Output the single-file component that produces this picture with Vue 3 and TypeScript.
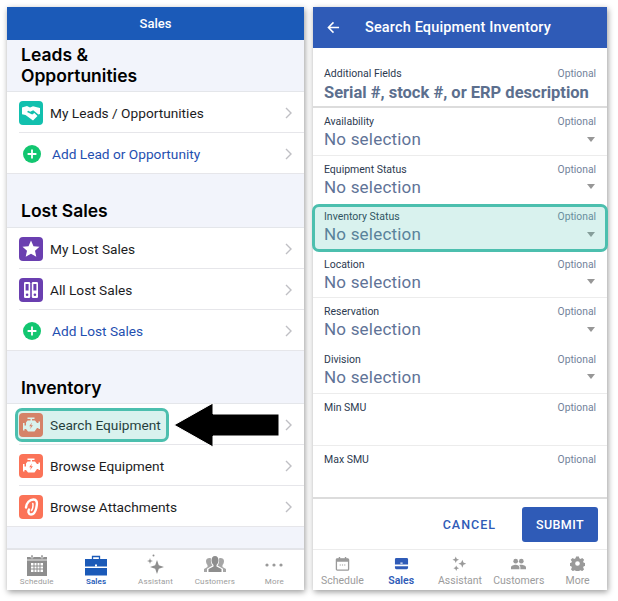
<script setup lang="ts">
type Row = { label: string; icon: string; add?: boolean };
type Section = { title: string[]; rows: Row[] };

const sections: Section[] = [
  {
    title: ["Leads &", "Opportunities"],
    rows: [
      { label: "My Leads / Opportunities", icon: "handshake" },
      { label: "Add Lead or Opportunity", icon: "add", add: true },
    ],
  },
  {
    title: ["Lost Sales"],
    rows: [
      { label: "My Lost Sales", icon: "star" },
      { label: "All Lost Sales", icon: "binders" },
      { label: "Add Lost Sales", icon: "add", add: true },
    ],
  },
  {
    title: ["Inventory"],
    rows: [
      { label: "Search Equipment", icon: "engine" },
      { label: "Browse Equipment", icon: "engine" },
      { label: "Browse Attachments", icon: "hook" },
    ],
  },
];

const fields = [
  { label: "Availability", line: true },
  { label: "Equipment Status", line: false },
  { label: "Inventory Status", line: false },
  { label: "Location", line: true },
  { label: "Reservation", line: false },
  { label: "Division", line: true },
];

const tabs = ["Schedule", "Sales", "Assistant", "Customers", "More"];
</script>

<template>
  <div class="page">
    <section class="phone phone_left">
      <header class="sales-head">Sales</header>
      <div class="sales-body">
        <div v-for="section in sections" :key="section.title[0]" class="group">
          <h2 class="group__title">
            <span v-for="line in section.title" :key="line">{{ line }}</span>
          </h2>
          <ul class="list">
            <li v-for="row in section.rows" :key="row.label" class="row" :class="{ row_add: row.add }">
              <svg v-if="row.icon === 'handshake'" class="app-icon" viewBox="0 0 24 24">
                <rect width="24" height="24" rx="4" fill="#12c0ae" />
                <path d="M3 6.500 8 5l3 1.500 3-1.300 7 1.800v6l-1.600.6-5.200-4.400-3 1.600-2-1-1.200 1.200 5.200 2.400 2.200-1.300 3.100 2.800-4.500 4.600-7.500-5.500-3.500-.8z" fill="#fff" />
              </svg>
              <svg v-else-if="row.icon === 'add'" class="add-icon" viewBox="0 0 18 18">
                <circle cx="9" cy="9" r="9" fill="#12c670" />
                <path d="M9 4.600v8.800M4.600 9h8.800" stroke="#fff" stroke-width="1.800" />
              </svg>
              <svg v-else-if="row.icon === 'star'" class="app-icon" viewBox="0 0 24 24">
                <rect width="24" height="24" rx="4" fill="#6a3fb0" />
                <path d="m12 3.600 2.500 5.600 6 .6-4.500 4 1.300 6L12 16.700l-5.300 3.100 1.300-6-4.500-4 6-.6z" fill="#fff" />
              </svg>
              <svg v-else-if="row.icon === 'binders'" class="app-icon" viewBox="0 0 24 24">
                <rect width="24" height="24" rx="4" fill="#6a3fb0" />
                <rect x="5" y="4" width="6.200" height="16" rx="1.200" fill="#fff" />
                <rect x="12.800" y="4" width="6.200" height="16" rx="1.200" fill="#fff" />
                <rect x="6.600" y="6" width="3" height="6.500" fill="#6a3fb0" />
                <rect x="14.400" y="6" width="3" height="6.500" fill="#6a3fb0" />
                <circle cx="8.100" cy="16.800" r="1.300" fill="#6a3fb0" />
                <circle cx="15.900" cy="16.800" r="1.300" fill="#6a3fb0" />
              </svg>
              <svg v-else-if="row.icon === 'engine'" class="app-icon" viewBox="0 0 24 24">
                <rect width="24" height="24" rx="4" fill="#fb7358" />
                <path d="M8.500 4.500h7v1.500h-2.500v1.500h3l2 2.500h1.500v-1.500h1.500v7.500H19.500V15h-1.500l-2.500 3.500H9L7 16H5.500v1.500H4V10h1.500v2.500H7V9.500l1.500-2h3V6H8.500z" fill="#fff" />
                <path d="M13 9.500 10.200 13.300h1.800l-1 2.900 2.900-4h-1.800z" fill="#fb7358" />
              </svg>
              <svg v-else class="app-icon" viewBox="0 0 24 24">
                <rect width="24" height="24" rx="4" fill="#fb7358" />
                <path d="M7 12.500C7.500 8 10.500 4.500 14.500 4.500c3 0 3.700 2.500 3.300 5.500-.5 4-1.800 9.500-5.800 9.500-2.700 0-3-3-2-5" fill="none" stroke="#fff" stroke-width="2.400" stroke-linecap="round" />
                <path d="M13.800 8.500c.5 2.500 0 5-1.300 7" fill="none" stroke="#fff" stroke-width="1.500" stroke-linecap="round" />
              </svg>
              <span class="row__label">{{ row.label }}</span>
              <svg class="chevron" viewBox="0 0 7 12">
                <path d="m1 1 5 5-5 5" fill="none" stroke="#bfbfc4" stroke-width="1.400" />
              </svg>
            </li>
          </ul>
        </div>
      </div>
      <nav class="tabs tabs_left">
        <div v-for="tab in tabs" :key="tab" class="tab" :class="{ tab_active: tab === 'Sales' }">
          <svg v-if="tab === 'Schedule'" class="tab__icon" viewBox="0 0 22 22">
            <path d="M1 3h20v19H1z" fill="#8e8e8e" />
            <path d="M5 1h2v3H5zM15 1h2v3h-2z" fill="#8e8e8e" stroke="#fff" stroke-width=".5" />
            <path d="M1 6h20" stroke="#fff" stroke-width=".8" />
            <path d="M5 9h12v9H5z" fill="#fff" />
            <path d="M8 9v9M11 9v9M14 9v9M5 12h12M5 15h12" stroke="#8e8e8e" stroke-width="1" />
          </svg>
          <svg v-else-if="tab === 'Sales'" class="tab__icon" viewBox="0 0 22 22">
            <path d="M7.500 5V2.500h7V5" fill="none" stroke="#1b5ab8" stroke-width="1.300" />
            <path d="M0 5h22v7.500H0zM0 14h22v7.500H0z" fill="#1b5ab8" />
            <rect x="10" y="10.500" width="2" height="2" fill="#fff" />
          </svg>
          <svg v-else-if="tab === 'Assistant'" class="tab__icon" viewBox="0 0 22 22">
            <path d="m13 6 1.800 5.200L20 13l-5.200 1.800L13 20l-1.800-5.200L6 13l5.200-1.800z" fill="#8e8e8e" />
            <path d="m6 4 .7 2.300L9 7l-2.300.7L6 10l-.7-2.300L3 7l2.300-.7z" fill="#8e8e8e" />
            <circle cx="9.500" cy="1.500" r="1" fill="#8e8e8e" />
          </svg>
          <svg v-else-if="tab === 'Customers'" class="tab__icon" viewBox="0 0 22 22">
            <path d="M11 2c2.300 0 3.500 2 3.500 4.300 0 2-.8 3.700-2 4.700v1.500l5 2.500v3H4.500v-3l5-2.500V11c-1.200-1-2-2.700-2-4.700C7.500 4 8.700 2 11 2z" fill="#8e8e8e" />
            <path d="M5.500 4c1 0 1.500.5 1.500.5-.5 3 .3 5.500 1.500 7L3 14.800V18H0v-3l3.500-2v-2C2.500 10 2 8.500 2 7c0-1.800 1.500-3 3.500-3zM16.500 4c2 0 3.500 1.200 3.500 3 0 1.500-.5 3-1.500 4v2l3.500 2v3h-3v-3.200l-5.500-3.300c1.200-1.500 2-4 1.500-7 0 0 .5-.5 1.500-.5z" fill="#a6a6a6" />
          </svg>
          <svg v-else class="tab__icon" viewBox="0 0 22 22">
            <circle cx="4" cy="11" r="1.600" fill="#9a9a9a" />
            <circle cx="11" cy="11" r="1.600" fill="#9a9a9a" />
            <circle cx="18" cy="11" r="1.600" fill="#9a9a9a" />
          </svg>
          <span class="tab__label">{{ tab }}</span>
        </div>
      </nav>

      <div class="mark mark_equipment"></div>
      <svg class="arrow" viewBox="0 0 108 48">
        <path d="M2 24 41 2v11h66v22H41v11z" fill="#000" stroke="#fff" stroke-width="1" />
      </svg>
    </section>

    <section class="phone phone_right">
      <header class="search-head">
        <svg class="back" viewBox="0 0 14 14">
          <path d="M13 7H2M7 1.500 1.500 7 7 12.500" fill="none" stroke="#fff" stroke-width="1.600" />
        </svg>
        <span>Search Equipment Inventory</span>
      </header>
      <div class="form">
        <div class="extra">
          <div class="field__top">
            <span class="field__label">Additional Fields</span>
            <span class="field__opt">Optional</span>
          </div>
          <div class="extra__hint">Serial #, stock #, or ERP description</div>
        </div>
        <div v-for="field in fields" :key="field.label" class="field" :class="{ field_line: field.line }">
          <div class="field__top">
            <span class="field__label">{{ field.label }}</span>
            <span class="field__opt">Optional</span>
          </div>
          <div class="field__value">
            <span>No selection</span>
            <i class="caret"></i>
          </div>
        </div>
        <div class="field field_free field_line">
          <div class="field__top">
            <span class="field__label">Min SMU</span>
            <span class="field__opt">Optional</span>
          </div>
        </div>
        <div class="field field_free">
          <div class="field__top">
            <span class="field__label">Max SMU</span>
            <span class="field__opt">Optional</span>
          </div>
        </div>
      </div>
      <footer class="actions">
        <span class="cancel">CANCEL</span>
        <span class="submit">SUBMIT</span>
      </footer>
      <nav class="tabs tabs_right">
        <div v-for="tab in tabs" :key="tab" class="tab" :class="{ tab_active: tab === 'Sales' }">
          <svg v-if="tab === 'Schedule'" class="tab__icon" viewBox="0 0 16 16">
            <path d="M2.500 3h11a1 1 0 0 1 1 1v10a1 1 0 0 1-1 1h-11a1 1 0 0 1-1-1V4a1 1 0 0 1 1-1z" fill="none" stroke="#9a9a9a" stroke-width="1.400" />
            <path d="M2 3h12v3H2zM4 1h1.500v2H4zM10.500 1H12v2h-1.500z" fill="#9a9a9a" />
            <path d="M5 9h1.200v1.200H5zM7.400 9h1.200v1.200H7.400zM9.800 9H11v1.200H9.800z" fill="#9a9a9a" />
          </svg>
          <svg v-else-if="tab === 'Sales'" class="tab__icon" viewBox="0 0 16 16">
            <path d="M1 3.500A1.500 1.500 0 0 1 2.500 2h11A1.500 1.500 0 0 1 15 3.500V9H1zM1 11h14v1.500a1.500 1.500 0 0 1-1.500 1.500h-11A1.500 1.500 0 0 1 1 12.500z" fill="#2f5bb7" />
            <rect x="6.800" y="7" width="2.400" height="1.200" fill="#fff" />
          </svg>
          <svg v-else-if="tab === 'Assistant'" class="tab__icon" viewBox="0 0 16 16">
            <path d="m4 .5 1 2.500 2.500 1L5 5 4 7.500 3 5 .5 4 3 3zM11 4l1.200 3 3 1.200-3 1.200-1.200 3-1.200-3-3-1.200 3-1.200zM4.500 10l.9 2.100 2.100.9-2.100.9-.9 2.100-.9-2.100-2.100-.9 2.100-.9z" fill="#9a9a9a" />
          </svg>
          <svg v-else-if="tab === 'Customers'" class="tab__icon" viewBox="0 0 16 16">
            <circle cx="5" cy="5.500" r="2.500" fill="#9a9a9a" />
            <circle cx="11" cy="5.500" r="2.500" fill="#9a9a9a" />
            <path d="M0 14v-1.800C0 10.300 3 9.300 5 9.300s4 1 4 2.900V14zM10 14v-1.800c0-1.200-.5-2-1.300-2.600.8-.2 1.600-.3 2.300-.3 2 0 5 1 5 2.900V14z" fill="#9a9a9a" />
          </svg>
          <svg v-else class="tab__icon" viewBox="0 0 16 16">
            <path fill-rule="evenodd" d="M6.500 .5h3l.4 2 1.400.6 1.700-1.100 2.100 2.100-1.100 1.700.6 1.400 2 .4v3l-2 .4-.6 1.400 1.100 1.700-2.100 2.100-1.700-1.100-1.400.6-.4 2h-3l-.4-2-1.400-.6-1.700 1.100-2.100-2.100 1.100-1.700-.6-1.400-2-.4v-3l2-.4.6-1.400L.7 4.100 2.800 2l1.700 1.100 1.400-.6zM8 5.500a2.500 2.500 0 1 0 0 5 2.500 2.500 0 0 0 0-5z" fill="#9a9a9a" />
          </svg>
          <span class="tab__label">{{ tab }}</span>
        </div>
      </nav>

      <div class="mark mark_status"></div>
    </section>
  </div>
</template>

<style>
html,
body {
  margin: 0;
  background: #fff;
}
</style>

<style scoped>
.page {
  display: flex;
  gap: 9px;
  width: 618px;
  height: 601px;
  padding: 7px 0 0 7px;
  box-sizing: border-box;
}

.phone {
  position: relative;
  display: flex;
  flex-direction: column;
  height: 583px;
  background: #fff;
  box-shadow: 1px 2px 6px rgba(0, 0, 0, 0.4);
}

.phone_left {
  width: 297px;
  font-family: Roboto, "Liberation Sans", sans-serif;
}

.phone_right {
  width: 294px;
  font-family: Roboto, "Liberation Sans", sans-serif;
}

.sales-head {
  flex: none;
  height: 33px;
  line-height: 33px;
  text-align: center;
  font-size: 13px;
  font-weight: 500;
  color: #fff;
  background: #1b5ab8;
}

.sales-body {
  flex: 1;
  min-height: 0;
  background: #f2f4fb;
  border-bottom: 1px solid #e3e5ea;
}

.group__title {
  display: flex;
  flex-direction: column;
  margin: 0;
  padding: 26px 14px 6px;
  font-family: Inter, "Liberation Sans", sans-serif;
  font-size: 17.500px;
  line-height: 21px;
  font-weight: 600;
  color: #000;
}

.group:first-child .group__title {
  padding-top: 4px;
  padding-bottom: 5px;
}

.group:last-child .group__title {
  padding-bottom: 5px;
}

.list {
  margin: 0;
  padding: 0;
  list-style: none;
  background: #fff;
  border-top: 1px solid #e4e6ea;
}

.row {
  position: relative;
  display: flex;
  align-items: center;
  height: 41px;
  padding-left: 12px;
  box-sizing: border-box;
}

.row::after {
  content: "";
  position: absolute;
  left: 12px;
  right: 0;
  bottom: 0;
  height: 1px;
  background: #e6e6ea;
}

.row:last-child::after {
  left: 0;
}

.app-icon {
  flex: none;
  width: 24px;
  height: 24px;
}

.add-icon {
  flex: none;
  width: 18px;
  height: 18px;
  margin: 0 11px 0 4px;
}

.row__label {
  flex: 1;
  margin-left: 7px;
  font-size: 13.700px;
  color: #1c1c1e;
}

.row_add .row__label {
  margin-left: 0;
  color: #1f4fb0;
}

.chevron {
  flex: none;
  width: 7px;
  height: 12px;
  margin-right: 12px;
}

.tabs {
  flex: none;
  display: grid;
  grid-template-columns: repeat(5, 1fr);
  background: #fff;
}

.tabs_left {
  height: 41px;
  border-top: 1px solid #e4e4e8;
  box-sizing: border-box;
}

.tabs_right {
  height: 40px;
}

.tab {
  display: flex;
  flex-direction: column;
  align-items: center;
  color: #9c9c9c;
}

.tab_active {
  color: #1b5ab8;
  font-weight: 600;
}

.tabs_left .tab__icon {
  width: 22px;
  height: 22px;
  margin-top: 4px;
}

.tabs_left .tab__label {
  margin-top: 1px;
  font-size: 8px;
  line-height: 10px;
  letter-spacing: 0.15px;
}

.tabs_right .tab__icon {
  width: 15px;
  height: 15px;
  margin-top: 6px;
}

.tabs_right .tab__label {
  margin-top: 3px;
  font-size: 10.500px;
  line-height: 14px;
}

.tabs_right .tab_active {
  color: #2f5bb7;
}

.search-head {
  flex: none;
  display: flex;
  align-items: center;
  gap: 25px;
  height: 41px;
  padding-left: 14px;
  font-size: 14.500px;
  font-weight: 500;
  letter-spacing: 0.15px;
  color: #fff;
  background: #2f5bb7;
}

.back {
  width: 13px;
  height: 13px;
}

.form {
  flex: 1;
  min-height: 0;
}

.field__top {
  display: flex;
  justify-content: space-between;
  line-height: 12px;
}

.field__label {
  font-size: 10.500px;
  color: #2c3a50;
}

.field__opt {
  font-size: 10.300px;
  color: #72829a;
}

.extra {
  height: 60px;
  padding: 20px 11px 0;
  box-sizing: border-box;
  border-bottom: 2px solid #dcdcdc;
}

.extra__hint {
  margin-top: 2px;
  font-size: 16.500px;
  line-height: 21px;
  font-weight: 700;
  white-space: nowrap;
  color: #5c6f8e;
}

.field {
  height: 47.600px;
  padding: 8px 11px 0;
  box-sizing: border-box;
}

.field_line {
  border-bottom: 1px solid #ececec;
}

.field_free {
  height: 52px;
}

.field__value {
  display: flex;
  align-items: center;
  justify-content: space-between;
  margin-top: 1px;
  font-size: 17px;
  line-height: 20px;
  letter-spacing: 0.2px;
  color: #5f7397;
}

.caret {
  width: 0;
  height: 0;
  margin-right: 1px;
  border-left: 4.500px solid transparent;
  border-right: 4.500px solid transparent;
  border-top: 5px solid #979797;
}

.actions {
  flex: none;
  display: flex;
  align-items: center;
  justify-content: flex-end;
  gap: 26px;
  height: 53px;
  padding-right: 9px;
  box-sizing: border-box;
  border-top: 2px solid #dcdcdc;
  border-bottom: 1px solid #ececec;
  font-size: 12.500px;
  font-weight: 500;
  letter-spacing: 1px;
}

.cancel {
  color: #2f5bb7;
}

.submit {
  width: 76px;
  line-height: 35px;
  text-align: center;
  letter-spacing: 0.4px;
  color: #fff;
  background: #2f5bb7;
  border-radius: 3px;
}

.mark {
  position: absolute;
  box-sizing: border-box;
  background: rgba(64, 190, 170, 0.2);
  border: 3px solid #4cbfae;
  border-radius: 7px;
}

.mark_equipment {
  left: 8px;
  top: 401px;
  width: 154px;
  height: 34px;
}

.mark_status {
  left: -1px;
  top: 197px;
  width: 296px;
  height: 48px;
}

.arrow {
  position: absolute;
  left: 165px;
  top: 394px;
  width: 108px;
  height: 48px;
}
</style>
